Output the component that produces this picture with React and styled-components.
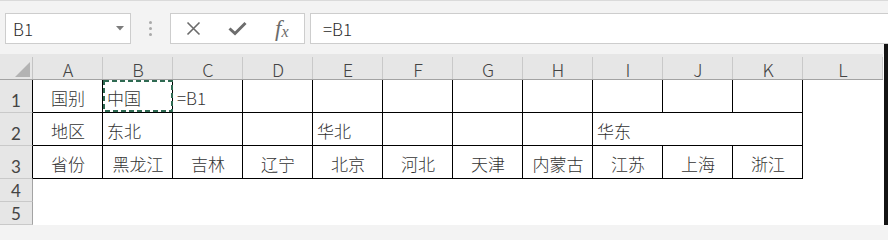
import React from 'react';
import styled, { createGlobalStyle } from 'styled-components';

const GlobalStyle = createGlobalStyle`
  html, body { margin: 0; padding: 0; background: #f3f3f3; overflow: hidden; }
  *, *::before, *::after { box-sizing: border-box; }
`;

const UI = '"Noto Sans CJK SC", "Noto Sans", sans-serif';

const Window = styled.div`
  width: 888px;
  height: 225px;
  display: flex;
  flex-direction: column;
  background: #f3f3f3;
  border-top: 1px solid #dadada;
  overflow: hidden;
  font-family: ${UI};
  font-weight: 300;
`;

const Toolbar = styled.div`
  display: flex;
  height: 43px;
  padding: 12px 0 0 5px;
  flex-shrink: 0;
`;

const Box = styled.div`
  height: 31px;
  background: #fff;
  border: 1px solid #cdcdcd;
  display: flex;
  align-items: center;
`;

const NameBox = styled(Box)`
  width: 126px;
  justify-content: space-between;
  padding: 0 6px 0 7px;
  font-size: 17px;
  color: #2a2a2a;
`;

const Splitter = styled.div`
  width: 39px;
  display: flex;
  flex-direction: column;
  align-items: center;
  justify-content: center;
  gap: 3px;
`;

const Dot = styled.span`
  width: 3px;
  height: 3px;
  border-radius: 50%;
  background: #a9a9a9;
`;

const FxPanel = styled(Box)`
  width: 135px;
`;

const FxSlot = styled.div`
  flex: 1;
  display: flex;
  align-items: center;
  justify-content: center;
  color: #6b6b6b;
`;

const FxText = styled.span`
  font-family: "Liberation Serif", "DejaVu Serif", serif;
  font-style: italic;
  font-weight: 400;
  font-size: 23px;
  color: #6b6b6b;
  line-height: 1;
  & sub {
    font-size: 16px;
    vertical-align: -1px;
  }
`;

const FormulaBar = styled(Box)`
  flex: 1;
  margin-left: 5px;
  border-right: none;
  padding-left: 12px;
  font-size: 17px;
  color: #2a2a2a;
`;

const SheetArea = styled.div`
  flex: 1;
  padding-top: 10px;
  border-right: 4px solid #141414;
`;

const Sheet = styled.div`
  display: grid;
  grid-template-columns: 33px repeat(11, 70px) 80px;
  grid-template-rows: 26px 33px 33px 33px 23px 23px;
  background: #fff;
`;

const sep = (c) =>
  `linear-gradient(${c}, ${c}) right bottom / 1px calc(100% - 3px) no-repeat`;

const Corner = styled.div`
  background: ${sep('#c4c4c4')}, #e6e6e6;
  border-bottom: 1px solid #a3a3a3;
  display: flex;
  align-items: flex-end;
  justify-content: flex-end;
  padding: 0 3px 2px 0;
`;

const ColHead = styled.div`
  background: ${sep('#c9c9c9')}, #e6e6e6;
  border-bottom: 1px solid #a3a3a3;
  display: flex;
  align-items: center;
  justify-content: center;
  padding-top: 4px;
  font-size: 18px;
  color: #444;
`;

const RowHead = styled.div`
  background: #e6e6e6;
  border-bottom: 1px solid #c9c9c9;
  border-right: 1px solid ${(p) => (p.$inTable ? '#000' : '#a3a3a3')};
  display: flex;
  align-items: flex-end;
  justify-content: center;
  padding-bottom: ${(p) => (p.$inTable ? '3px' : '2px')};
  font-family: Lato, "Noto Sans", sans-serif;
  font-weight: 400;
  font-size: 17px;
  line-height: 17px;
  color: #444;
`;

const Cell = styled.div`
  position: relative;
  grid-column: span ${(p) => p.$span || 1};
  border-right: ${(p) => (p.$b ? '1px solid #000' : 'none')};
  border-bottom: ${(p) => (p.$b ? '1px solid #000' : 'none')};
  display: flex;
  align-items: center;
  justify-content: ${(p) => (p.$align === 'left' ? 'flex-start' : 'center')};
  padding: 2px 3px 0 4px;
  font-size: 17px;
  color: #333;
  white-space: nowrap;
`;

const Marquee = styled.svg`
  position: absolute;
  left: 0;
  top: 0;
  pointer-events: none;
`;

const cols = ['A', 'B', 'C', 'D', 'E', 'F', 'G', 'H', 'I', 'J', 'K', 'L'];

const rows = [
  [
    { t: '国别' },
    { t: '中国', a: 'left', m: true },
    { t: '=B1', a: 'left' },
    {}, {}, {}, {}, {}, {}, {}, {},
  ],
  [
    { t: '地区' },
    { t: '东北', a: 'left' },
    {}, {},
    { t: '华北', a: 'left' },
    {}, {}, {},
    { t: '华东', a: 'left', s: 3 },
  ],
  ['省份', '黑龙江', '吉林', '辽宁', '北京', '河北', '天津', '内蒙古', '江苏', '上海', '浙江'].map((t) => ({ t })),
];

export default function App() {
  return (
    <>
      <GlobalStyle />
      <Window>
        <Toolbar>
          <NameBox>
            <span>B1</span>
            <svg width="8" height="5" viewBox="0 0 8 5">
              <path d="M0 0 H8 L4 4.5 Z" fill="#7c7c7c" />
            </svg>
          </NameBox>
          <Splitter>
            <Dot />
            <Dot />
            <Dot />
          </Splitter>
          <FxPanel>
            <FxSlot>
              <svg width="15" height="15" viewBox="0 0 15 15">
                <path d="M1.5 1.5 L13.5 13.5 M13.5 1.5 L1.5 13.5" stroke="#6b6b6b" strokeWidth="1.6" fill="none" />
              </svg>
            </FxSlot>
            <FxSlot>
              <svg width="19" height="15" viewBox="0 0 19 15">
                <path d="M1.5 7.5 L7 12.5 L17.5 2" stroke="#6d6d6d" strokeWidth="3" fill="none" />
              </svg>
            </FxSlot>
            <FxSlot>
              <FxText>
                f<sub>x</sub>
              </FxText>
            </FxSlot>
          </FxPanel>
          <FormulaBar>=B1</FormulaBar>
        </Toolbar>
        <SheetArea>
          <Sheet>
            <Corner>
              <svg width="15" height="15" viewBox="0 0 15 15">
                <path d="M15 0 V15 H0 Z" fill="#b3b3b3" />
              </svg>
            </Corner>
            {cols.map((c) => (
              <ColHead key={c}>{c}</ColHead>
            ))}
            {rows.map((r, ri) => (
              <React.Fragment key={ri}>
                <RowHead $inTable>{ri + 1}</RowHead>
                {r.map((c, ci) => (
                  <Cell key={ci} $b $align={c.a} $span={c.s}>
                    {c.t}
                    {c.m && (
                      <Marquee width="70" height="32" viewBox="0 0 70 32">
                        <rect x="1" y="1" width="68" height="30" fill="none" stroke="#2f6a52" strokeWidth="2" strokeDasharray="5 3" />
                      </Marquee>
                    )}
                  </Cell>
                ))}
                <Cell />
              </React.Fragment>
            ))}
            {[4, 5].map((n) => (
              <React.Fragment key={n}>
                <RowHead>{n}</RowHead>
                {cols.map((c) => (
                  <Cell key={c} />
                ))}
              </React.Fragment>
            ))}
          </Sheet>
        </SheetArea>
      </Window>
    </>
  );
}
